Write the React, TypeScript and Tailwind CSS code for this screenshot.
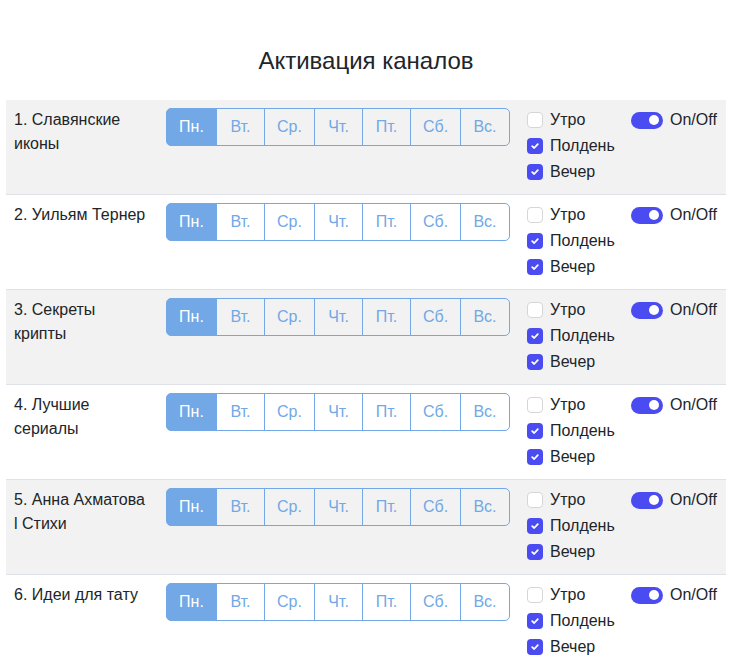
import React from "react";

const channels = [
  "1. Славянские иконы",
  "2. Уильям Тернер",
  "3. Секреты крипты",
  "4. Лучшие сериалы",
  "5. Анна Ахматова l Стихи",
  "6. Идеи для тату",
];

const days = ["Пн.", "Вт.", "Ср.", "Чт.", "Пт.", "Сб.", "Вс."];
const widths = ["w-[51px]", "w-[49px]", "w-[51px]", "w-[49px]", "w-[49px]", "w-[51px]", "w-[50px]"];

function Check({ checked }: { checked: boolean }) {
  return checked ? (
    <span className="w-[16px] h-[16px] rounded-[4px] bg-[#4a4cf2] flex items-center justify-center">
      <svg width="10" height="10" viewBox="0 0 10 10">
        <path d="M2.2 5.2 L4.2 7 L7.8 3.2" fill="none" stroke="white" strokeWidth="1.8" strokeLinecap="round" strokeLinejoin="round" />
      </svg>
    </span>
  ) : (
    <span className="w-[16px] h-[16px] rounded-[4px] bg-white border border-[#d6d6d6]" />
  );
}

export default function App() {
  return (
    <div className="w-[732px] bg-white text-[#212529]" style={{ fontFamily: '"Liberation Sans", Arial, sans-serif' }}>
      <div className="pt-[45px] pb-[23px] text-center text-[24px] leading-[32px]">Активация каналов</div>
      <div className="mx-[6px] w-[720px]">
        {channels.map((name, i) => (
          <div
            key={i}
            className={`flex px-[8px] pt-[7px] pb-[9px] border-b border-[#dee2e6] ${i % 2 === 0 ? "bg-[#f2f2f2]" : "bg-white"}`}
          >
            <div className="w-[136px] pt-[1px] text-[16px] leading-[24px]">{name}</div>
            <div className="ml-[16px] mt-[1px] flex h-[38px] self-start">
              {days.map((d, j) => (
                <div
                  key={j}
                  className={`${widths[j]} flex items-center justify-center text-[16px] leading-[24px] border border-[#72a8e6] ${
                    j === 0 ? "bg-[#72a8e6] text-white rounded-l-[5px]" : "text-[#72a8e6] -ml-px"
                  } ${j === 6 ? "rounded-r-[5px]" : ""}`}
                >
                  {d}
                </div>
              ))}
            </div>
            <div className="ml-[17px] flex flex-col w-[88px]">
              {[
                ["Утро", false],
                ["Полдень", true],
                ["Вечер", true],
              ].map(([label, c], k) => (
                <div key={k} className="h-[26px] flex items-center gap-[7px] text-[16px]">
                  <Check checked={c as boolean} />
                  <span>{label as string}</span>
                </div>
              ))}
            </div>
            <div className="ml-[16px] h-[26px] flex items-center">
              <span className="w-[32px] h-[17px] rounded-full bg-[#4a4cf2] relative">
                <span className="absolute right-[4px] top-[3.5px] w-[10px] h-[10px] rounded-full bg-white" />
              </span>
              <span className="ml-[7px] text-[16px]">On/Off</span>
            </div>
          </div>
        ))}
      </div>
    </div>
  );
}
